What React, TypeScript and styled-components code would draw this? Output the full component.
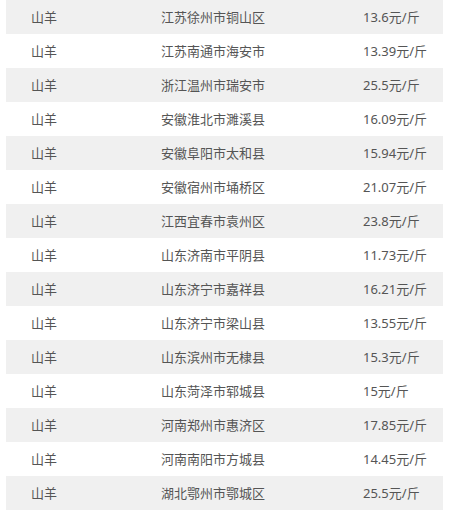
import React from "react";
import styled, { createGlobalStyle } from "styled-components";

const Global = createGlobalStyle`
  html, body { margin: 0; padding: 0; background: #ffffff; }
  body { font-family: "Noto Sans", "Noto Sans CJK SC", sans-serif; }
`;

const Table = styled.div`
  margin-left: 6px;
  width: 437px;
  display: flex;
  flex-direction: column;
`;

const Row = styled.div<{ $shaded: boolean }>`
  display: grid;
  grid-template-columns: 155px 202px 1fr;
  height: 34px;
  align-items: center;
  background: ${(p) => (p.$shaded ? "#f0f0f0" : "#ffffff")};
`;

const Cell = styled.div<{ $pad?: number }>`
  padding-left: ${(p) => p.$pad ?? 0}px;
  font-size: 13px;
  line-height: 34px;
  color: #555555;
  white-space: nowrap;
`;

const rows: [string, string][] = [
  ["江苏徐州市铜山区", "13.6元/斤"],
  ["江苏南通市海安市", "13.39元/斤"],
  ["浙江温州市瑞安市", "25.5元/斤"],
  ["安徽淮北市濉溪县", "16.09元/斤"],
  ["安徽阜阳市太和县", "15.94元/斤"],
  ["安徽宿州市埇桥区", "21.07元/斤"],
  ["江西宜春市袁州区", "23.8元/斤"],
  ["山东济南市平阴县", "11.73元/斤"],
  ["山东济宁市嘉祥县", "16.21元/斤"],
  ["山东济宁市梁山县", "13.55元/斤"],
  ["山东滨州市无棣县", "15.3元/斤"],
  ["山东菏泽市郓城县", "15元/斤"],
  ["河南郑州市惠济区", "17.85元/斤"],
  ["河南南阳市方城县", "14.45元/斤"],
  ["湖北鄂州市鄂城区", "25.5元/斤"],
];

export default function App() {
  return (
    <>
      <Global />
      <Table>
        {rows.map(([place, price], i) => (
          <Row key={i} $shaded={i % 2 === 0}>
            <Cell $pad={25}>山羊</Cell>
            <Cell>{place}</Cell>
            <Cell>{price}</Cell>
          </Row>
        ))}
      </Table>
    </>
  );
}
